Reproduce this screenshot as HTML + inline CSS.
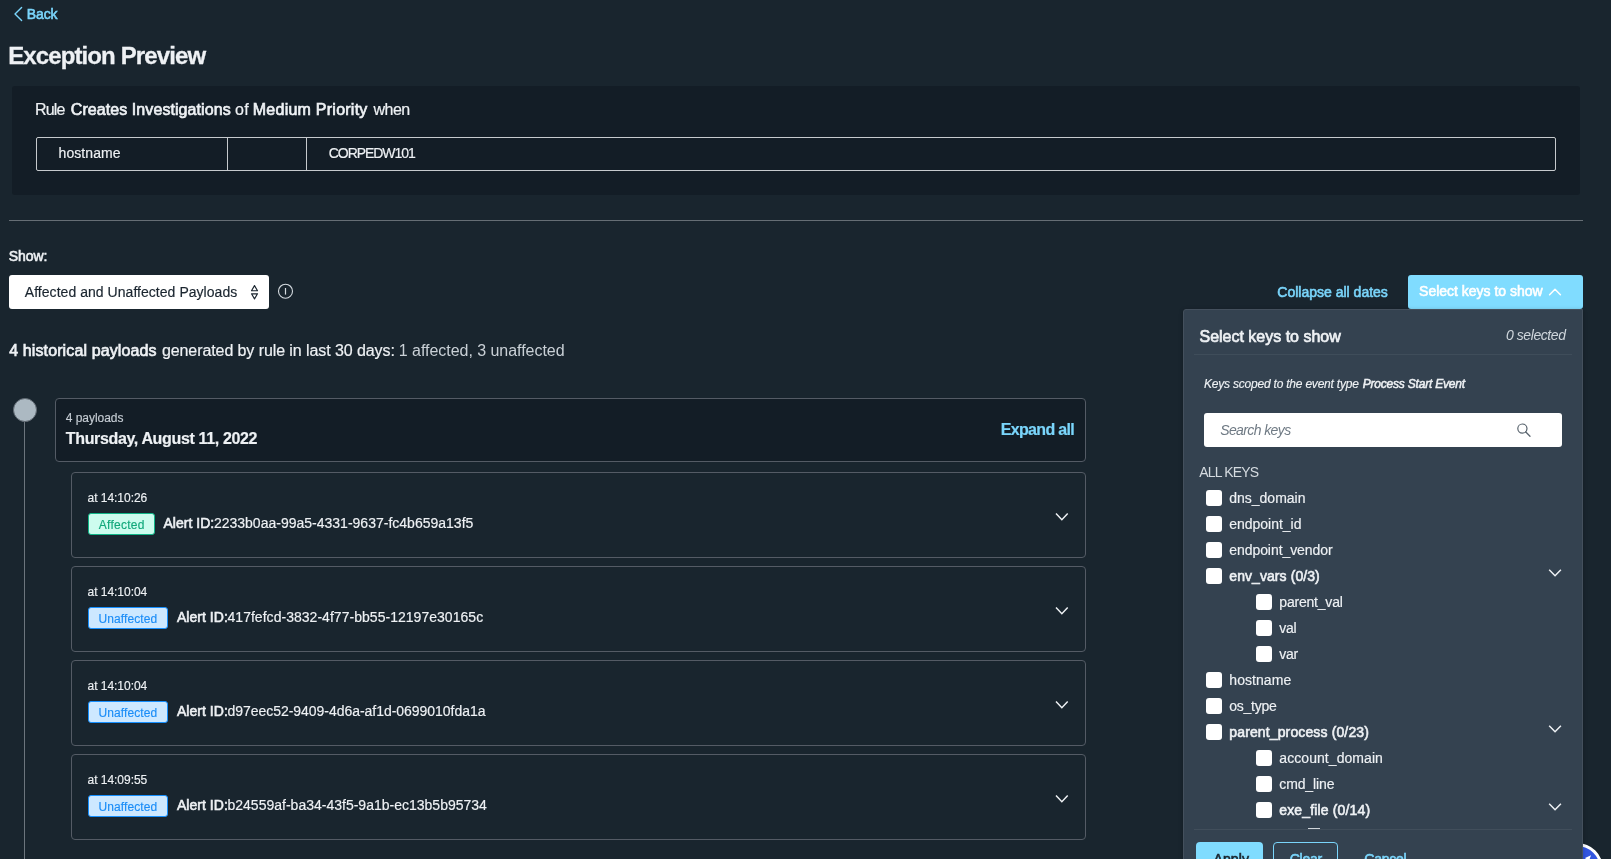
<!DOCTYPE html>
<html lang="en"><head><meta charset="utf-8"><title>Exception Preview</title>
<style>
html,body{margin:0;padding:0}
body{width:1611px;height:859px;overflow:hidden;position:relative;background:#19252e;font-family:"Liberation Sans",sans-serif;color:#eef1f4}
.a{position:absolute;box-sizing:border-box}
.t{position:absolute;white-space:pre;margin:0}
.t{-webkit-text-stroke:0.012em currentColor}
.m{-webkit-text-stroke:0.042em currentColor}
.l{-webkit-text-stroke:0}
svg{position:absolute;overflow:visible}
.cb{position:absolute;width:16px;height:16px;background:#fff;border-radius:3px}
.card{position:absolute;box-sizing:border-box;left:71px;width:1015px;height:86px;border:1px solid #545b65;border-radius:4px}
.badge{position:absolute;box-sizing:border-box;height:22px;border-radius:3px}
.ba{left:88px;width:67px;background:#cdfcee;border:1px solid #10b587}
.bu{left:88px;width:80px;background:#cde8ff;border:1px solid #1690ff}
#root{position:absolute;left:0;top:0;width:1611px;height:859px;overflow:hidden;will-change:transform}

</style></head>
<body>
<div id="root">
<!-- back chevron -->
<svg style="left:0;top:0" width="40" height="30"><polyline points="21.6,7.4 15,14 21.6,20.6" fill="none" stroke="#7ad5fb" stroke-width="1.4" stroke-linecap="round" stroke-linejoin="round"/></svg>
<!-- rule card -->
<div class="a" style="left:12px;top:86px;width:1568px;height:109px;background:#131d26;border-radius:3px"></div>
<div class="a" style="left:36px;top:137px;width:1520px;height:34px;border:1px solid #c6cacd;border-radius:2px"></div>
<div class="a" style="left:227px;top:138px;width:1px;height:32px;background:#c6cacd"></div>
<div class="a" style="left:306px;top:138px;width:1px;height:32px;background:#c6cacd"></div>
<!-- hr -->
<div class="a" style="left:9px;top:220px;width:1574px;height:1px;background:#666e75"></div>
<!-- select -->
<div class="a" style="left:9px;top:275.4px;width:260px;height:33.2px;background:#fff;border-radius:3px"></div>
<svg style="left:249px;top:284px" width="12" height="16"><path d="M5.5 1.6 L8.5 6.7 H2.5 Z M5.5 14.9 L8.5 9.8 H2.5 Z" fill="none" stroke="#1a252f" stroke-width="1.15" stroke-linejoin="round"/></svg>
<!-- info icon -->
<svg style="left:277px;top:282.7px" width="17" height="17"><circle cx="8.5" cy="8.2" r="7" fill="none" stroke="#d5dbe0" stroke-width="1.1"/><line x1="8.5" y1="5" x2="8.5" y2="11.6" stroke="#d5dbe0" stroke-width="1.2"/></svg>
<!-- timeline -->
<div class="a" style="left:23.9px;top:410px;width:1.3px;height:460px;background:#6c757d"></div>
<div class="a" style="left:13px;top:398px;width:24px;height:24px;border-radius:50%;background:#acb9c2;border:1px solid #5f6871"></div>
<!-- date card -->
<div class="a" style="left:55px;top:398px;width:1031px;height:64px;background:#131d26;border:1px solid #545b65;border-radius:4px"></div>
<!-- alert cards -->
<div class="card" style="top:472px"></div>
<div class="card" style="top:566px"></div>
<div class="card" style="top:660px"></div>
<div class="card" style="top:754px"></div>
<div class="badge ba" style="top:513px"></div>
<div class="badge bu" style="top:607px"></div>
<div class="badge bu" style="top:701px"></div>
<div class="badge bu" style="top:795px"></div>
<svg style="left:1054px;top:510px" width="16" height="300">
<g fill="none" stroke="#eef1f4" stroke-width="1.5">
<polyline points="2,3.6 7.85,9.7 13.7,3.6"/>
<polyline points="2,97.6 7.85,103.7 13.7,97.6"/>
<polyline points="2,191.6 7.85,197.7 13.7,191.6"/>
<polyline points="2,285.6 7.85,291.7 13.7,285.6"/>
</g></svg>
<!-- accessibility widget circle (behind panel) -->
<div class="a" style="left:1550.6px;top:842.7px;width:52px;height:52px;border-radius:50%;background:#3356e0;border:3.7px solid #fff"></div>
<svg style="left:1579.5px;top:850px" width="16" height="10"><polygon points="11,5.3 5,8 6.5,9.5 9.5,9.5" fill="#fff"/></svg>
<!-- select keys button -->
<div class="a" style="left:1408px;top:275px;width:175px;height:34px;background:#80dcff;border-radius:3px"></div>
<svg style="left:1547px;top:285px" width="16" height="14"><polyline points="2.6,9.8 8,4.2 13.4,9.8" fill="none" stroke="#fff" stroke-width="1.5" stroke-linecap="round" stroke-linejoin="round"/></svg>
<!-- panel -->
<div class="a" style="left:1183px;top:309px;width:400px;height:560px;background:#344250;border:1px solid #44505d;border-radius:3px 0 0 0;box-shadow:0 1px 4px rgba(0,0,0,.25)"></div>
<div class="a" style="left:1194px;top:354px;width:378px;height:1px;background:#3f4d5a"></div>
<div class="a" style="left:1204px;top:413.3px;width:358px;height:33.3px;background:#fff;border-radius:3px"></div>
<svg style="left:1515px;top:421px" width="18" height="18"><circle cx="7.4" cy="7.6" r="4.6" fill="none" stroke="#59646e" stroke-width="1.2"/><line x1="10.8" y1="11" x2="15" y2="15.2" stroke="#59646e" stroke-width="1.3" stroke-linecap="round"/></svg>
<!-- checkboxes -->
<div class="cb" style="left:1206px;top:490px"></div>
<div class="cb" style="left:1206px;top:516px"></div>
<div class="cb" style="left:1206px;top:542px"></div>
<div class="cb" style="left:1206px;top:568px"></div>
<div class="cb" style="left:1256px;top:594px"></div>
<div class="cb" style="left:1256px;top:620px"></div>
<div class="cb" style="left:1256px;top:646px"></div>
<div class="cb" style="left:1206px;top:672px"></div>
<div class="cb" style="left:1206px;top:698px"></div>
<div class="cb" style="left:1206px;top:724px"></div>
<div class="cb" style="left:1256px;top:750px"></div>
<div class="cb" style="left:1256px;top:776px"></div>
<div class="cb" style="left:1256px;top:802px"></div>
<div class="a" style="left:1308px;top:828px;width:12px;height:1px;background:#cfd5da"></div>
<svg style="left:1547px;top:566px" width="16" height="260">
<g fill="none" stroke="#eef1f4" stroke-width="1.5">
<polyline points="2.2,3.8 8.05,9.8 13.9,3.8"/>
<polyline points="2.2,159.8 8.05,165.8 13.9,159.8"/>
<polyline points="2.2,237.8 8.05,243.8 13.9,237.8"/>
</g></svg>
<!-- footer -->
<div class="a" style="left:1194px;top:829px;width:378px;height:1px;background:#414e5b"></div>
<div class="a" style="left:1196px;top:842px;width:67px;height:34px;background:#80dcff;border-radius:4px"></div>
<div class="a" style="left:1273px;top:842px;width:65px;height:34px;border:1px solid #7ad5fb;border-radius:4px"></div>

<div class="t m" style="left:26.80px;top:6px;font-size:14px;line-height:16px;letter-spacing:-0.144px;color:#7ad5fb;">Back</div>
<div class="t" style="left:8.20px;top:42px;font-size:24px;line-height:27px;letter-spacing:-0.889px;color:#eef1f4;font-weight:700;">Exception Preview</div>
<div class="t" style="left:35.00px;top:101px;font-size:16px;line-height:17px;letter-spacing:-0.812px;color:#eef1f4;">Rule</div>
<div class="t m" style="left:70.80px;top:101px;font-size:16px;line-height:17px;letter-spacing:0.073px;color:#eef1f4;">Creates Investigations</div>
<div class="t" style="left:235.10px;top:101px;font-size:16px;line-height:17px;letter-spacing:0.202px;color:#eef1f4;">of</div>
<div class="t m" style="left:252.80px;top:101px;font-size:16px;line-height:17px;letter-spacing:0.244px;color:#eef1f4;">Medium Priority</div>
<div class="t" style="left:373.50px;top:101px;font-size:16px;line-height:17px;letter-spacing:-0.517px;color:#eef1f4;">when</div>
<div class="t" style="left:58.60px;top:145px;font-size:14px;line-height:16px;letter-spacing:0.061px;color:#eef1f4;">hostname</div>
<div class="t" style="left:328.80px;top:145px;font-size:14px;line-height:16px;letter-spacing:-1.054px;color:#eef1f4;">CORPEDW101</div>
<div class="t m" style="left:8.80px;top:248px;font-size:14px;line-height:16px;letter-spacing:-0.108px;color:#eef1f4;">Show:</div>
<div class="t" style="left:24.80px;top:284px;font-size:14px;line-height:16px;letter-spacing:0.041px;color:#1a252f;">Affected and Unaffected Payloads</div>
<div class="t m" style="left:9.20px;top:342px;font-size:16px;line-height:17px;letter-spacing:0.121px;color:#eef1f4;">4 historical payloads</div>
<div class="t" style="left:161.90px;top:342px;font-size:16px;line-height:17px;letter-spacing:-0.084px;color:#eef1f4;">generated by rule in last 30 days:</div>
<div class="t l" style="left:398.80px;top:342px;font-size:16px;line-height:17px;letter-spacing:-0.038px;color:#c9d0d6;">1 affected, 3 unaffected</div>
<div class="t" style="left:65.80px;top:411px;font-size:12px;line-height:14px;letter-spacing:-0.046px;color:#c5ccd3;">4 payloads</div>
<div class="t" style="left:65.80px;top:430px;font-size:16px;line-height:17px;letter-spacing:-0.351px;color:#eef1f4;font-weight:700;">Thursday, August 11, 2022</div>
<div class="t" style="left:1000.80px;top:421px;font-size:16px;line-height:17px;letter-spacing:-0.681px;color:#7ad5fb;font-weight:700;">Expand all</div>
<div class="t" style="left:87.60px;top:491px;font-size:12px;line-height:14px;letter-spacing:-0.042px;color:#eef1f4;">at 14:10:26</div>
<div class="t" style="left:98.80px;top:518px;font-size:12px;line-height:14px;letter-spacing:0.261px;color:#12a87b;">Affected</div>
<div class="t m" style="left:163.40px;top:515px;font-size:14px;line-height:16px;letter-spacing:0.026px;color:#eef1f4;">Alert ID:</div>
<div class="t" style="left:213.90px;top:515px;font-size:14px;line-height:16px;letter-spacing:0.006px;color:#eef1f4;">2233b0aa-99a5-4331-9637-fc4b659a13f5</div>
<div class="t" style="left:87.60px;top:585px;font-size:12px;line-height:14px;letter-spacing:-0.042px;color:#eef1f4;">at 14:10:04</div>
<div class="t" style="left:98.50px;top:612px;font-size:12px;line-height:14px;letter-spacing:0.103px;color:#1b8df7;">Unaffected</div>
<div class="t m" style="left:177.00px;top:609px;font-size:14px;line-height:16px;letter-spacing:0.026px;color:#eef1f4;">Alert ID:</div>
<div class="t" style="left:227.50px;top:609px;font-size:14px;line-height:16px;letter-spacing:0.031px;color:#eef1f4;">417fefcd-3832-4f77-bb55-12197e30165c</div>
<div class="t" style="left:87.60px;top:679px;font-size:12px;line-height:14px;letter-spacing:-0.042px;color:#eef1f4;">at 14:10:04</div>
<div class="t" style="left:98.50px;top:706px;font-size:12px;line-height:14px;letter-spacing:0.103px;color:#1b8df7;">Unaffected</div>
<div class="t m" style="left:177.00px;top:703px;font-size:14px;line-height:16px;letter-spacing:0.026px;color:#eef1f4;">Alert ID:</div>
<div class="t" style="left:227.50px;top:703px;font-size:14px;line-height:16px;letter-spacing:-0.037px;color:#eef1f4;">d97eec52-9409-4d6a-af1d-0699010fda1a</div>
<div class="t" style="left:87.60px;top:773px;font-size:12px;line-height:14px;letter-spacing:-0.042px;color:#eef1f4;">at 14:09:55</div>
<div class="t" style="left:98.50px;top:800px;font-size:12px;line-height:14px;letter-spacing:0.103px;color:#1b8df7;">Unaffected</div>
<div class="t m" style="left:177.00px;top:797px;font-size:14px;line-height:16px;letter-spacing:0.026px;color:#eef1f4;">Alert ID:</div>
<div class="t" style="left:227.50px;top:797px;font-size:14px;line-height:16px;letter-spacing:0.005px;color:#eef1f4;">b24559af-ba34-43f5-9a1b-ec13b5b95734</div>
<div class="t m" style="left:1277.30px;top:284px;font-size:14px;line-height:16px;letter-spacing:0.004px;color:#7ad5fb;">Collapse all dates</div>
<div class="t m" style="left:1419.10px;top:283px;font-size:14px;line-height:16px;letter-spacing:-0.009px;color:#ffffff;">Select keys to show</div>
<div class="t m" style="left:1199.50px;top:328px;font-size:16px;line-height:17px;letter-spacing:-0.010px;color:#eef1f4;">Select keys to show</div>
<div class="t l" style="left:1505.90px;top:327px;font-size:14px;line-height:16px;letter-spacing:-0.415px;color:#cfd6dc;font-style:italic;">0 selected</div>
<div class="t" style="left:1204.00px;top:377px;font-size:12px;line-height:14px;letter-spacing:-0.211px;color:#eef1f4;font-style:italic;">Keys scoped to the event type</div>
<div class="t m" style="left:1362.70px;top:377px;font-size:12px;line-height:14px;letter-spacing:-0.200px;color:#eef1f4;font-style:italic;">Process Start Event</div>
<div class="t l" style="left:1220.20px;top:422px;font-size:14px;line-height:16px;letter-spacing:-0.603px;color:#6f7a84;font-style:italic;">Search keys</div>
<div class="t l" style="left:1199.30px;top:464px;font-size:14px;line-height:16px;letter-spacing:-0.829px;color:#d5dbe0;">ALL KEYS</div>
<div class="t" style="left:1229.30px;top:490px;font-size:14px;line-height:16px;letter-spacing:-0.016px;color:#eef1f4;">dns_domain</div>
<div class="t" style="left:1229.30px;top:516px;font-size:14px;line-height:16px;letter-spacing:-0.028px;color:#eef1f4;">endpoint_id</div>
<div class="t" style="left:1229.30px;top:542px;font-size:14px;line-height:16px;letter-spacing:-0.071px;color:#eef1f4;">endpoint_vendor</div>
<div class="t m" style="left:1229.30px;top:568px;font-size:14px;line-height:16px;letter-spacing:0.072px;color:#eef1f4;">env_vars (0/3)</div>
<div class="t" style="left:1279.30px;top:594px;font-size:14px;line-height:16px;letter-spacing:-0.204px;color:#eef1f4;">parent_val</div>
<div class="t" style="left:1279.30px;top:620px;font-size:14px;line-height:16px;letter-spacing:-0.246px;color:#eef1f4;">val</div>
<div class="t" style="left:1279.30px;top:646px;font-size:14px;line-height:16px;letter-spacing:-0.246px;color:#eef1f4;">var</div>
<div class="t" style="left:1229.30px;top:672px;font-size:14px;line-height:16px;letter-spacing:0.061px;color:#eef1f4;">hostname</div>
<div class="t" style="left:1229.30px;top:698px;font-size:14px;line-height:16px;letter-spacing:-0.276px;color:#eef1f4;">os_type</div>
<div class="t m" style="left:1229.30px;top:724px;font-size:14px;line-height:16px;letter-spacing:0.131px;color:#eef1f4;">parent_process (0/23)</div>
<div class="t" style="left:1279.30px;top:750px;font-size:14px;line-height:16px;letter-spacing:0.064px;color:#eef1f4;">account_domain</div>
<div class="t" style="left:1279.30px;top:776px;font-size:14px;line-height:16px;letter-spacing:-0.126px;color:#eef1f4;">cmd_line</div>
<div class="t m" style="left:1279.30px;top:802px;font-size:14px;line-height:16px;letter-spacing:0.145px;color:#eef1f4;">exe_file (0/14)</div>
<div class="t m" style="left:1213.50px;top:851px;font-size:14px;line-height:16px;letter-spacing:0.112px;color:#1a252f;">Apply</div>
<div class="t m" style="left:1289.70px;top:851px;font-size:14px;line-height:16px;letter-spacing:-0.260px;color:#7ad5fb;">Clear</div>
<div class="t m" style="left:1364.30px;top:851px;font-size:14px;line-height:16px;letter-spacing:-0.237px;color:#7ad5fb;">Cancel</div>
</div>
</body></html>
